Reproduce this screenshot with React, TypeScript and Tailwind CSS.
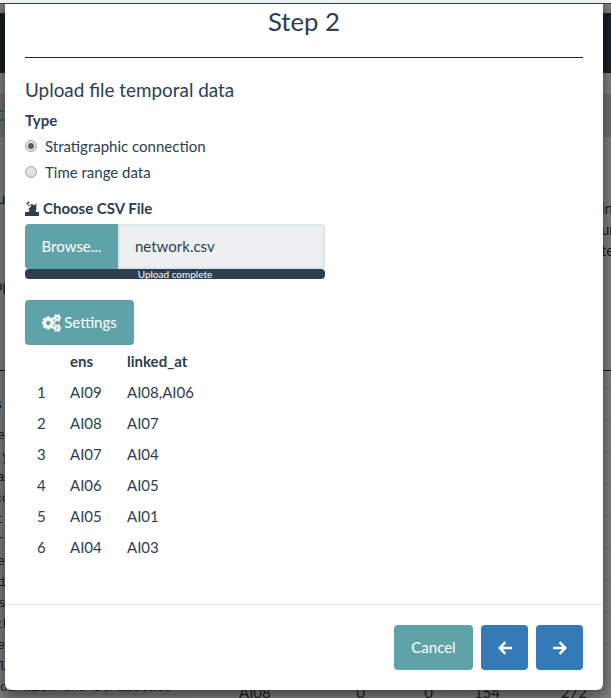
import React from "react";

const rows = [
  ["1", "AI09", "AI08,AI06"],
  ["2", "AI08", "AI07"],
  ["3", "AI07", "AI04"],
  ["4", "AI06", "AI05"],
  ["5", "AI05", "AI01"],
  ["6", "AI04", "AI03"],
];

const helpLines: [string, string][] = [
  ["e", "-ml-[3px]"],
  ["y", "ml-[2px]"],
  ["a", "-ml-[3px]"],
  ["co", "-ml-[6px]"],
  ["t)", "-ml-[5px]"],
  ["ri", "-ml-[4px]"],
  ["e", "-ml-[3px]"],
  ["i", "-ml-px"],
  ["s", "-ml-[2px]"],
  ["th", "-ml-[5px]"],
  ["e", "-ml-[3px]"],
  ["l", "-ml-[2px]"],
  ["oa with the Stradstats", "ml-0"],
];

function Backdrop() {
  return (
    <div className="h-[698px] w-[611px] overflow-hidden bg-white pt-[13px] text-[15px] text-[#2c3e50]">
      <div className="h-[60px] bg-[#2c3e50]" />
      <div className="h-[21px]" />
      <div className="flex h-[43px] items-center bg-[#dcdfe0]">
        <span className="-ml-[6px] text-[#18bc9c]">C</span>
      </div>
      <div className="flex h-[233px] justify-between">
        <div className="h-[233px] w-[100px] pt-[51px]">
          <div className="-ml-[3px] h-[87px] leading-[21px]">u</div>
          <div className="-ml-[6px] leading-[21px]">op</div>
        </div>
        <div className="w-[10px] overflow-hidden pt-[61px] leading-[21px]">
          <div>in</div>
          <div>un</div>
          <div>te</div>
        </div>
      </div>
      <div className="h-px bg-[#222]" />
      <div className="flex">
        <div className="w-[196px] shrink-0 bg-[#f7f7f7]">
          <div className="-ml-[5px] h-[54px] pt-[22px] text-[15px] leading-[21px] font-bold">s</div>
          <div className="font-['Liberation_Mono',monospace] text-[13px] leading-[21px] whitespace-pre">
            {helpLines.map(([line, indent], i) => (
              <div key={i} className={indent}>
                {line}
              </div>
            ))}
          </div>
        </div>
        <div className="flex-1 pt-4">
          {[0, 1, 2, 3, 4, 5, 6, 7, 8].map((n) => (
            <div key={n} className="h-8 border-t border-[#e6e6e6]" />
          ))}
          <div className="grid h-10 grid-cols-[31px_84px_67px_67px_67px_87px_1fr] border-t border-[#e6e6e6] pt-[5px]">
            <span className="border-r border-[#e6e6e6]" />
            <span className="border-r border-[#e6e6e6] pl-3">AI08</span>
            <span className="border-r border-[#e6e6e6] pr-3 text-right">0</span>
            <span className="border-r border-[#e6e6e6] pr-[11px] text-right">0</span>
            <span className="border-r border-[#e6e6e6] pr-[11px] text-right">154</span>
            <span className="border-r border-[#e6e6e6] pr-[11px] text-right">272</span>
          </div>
        </div>
      </div>
    </div>
  );
}

function Radio({ label, checked }: { label: string; checked?: boolean }) {
  return (
    <label className="flex h-[26px] items-center gap-2">
      <span className="flex size-3 items-center justify-center rounded-full border border-[#a8a8a8] bg-linear-to-b from-[#e4e4e4] to-[#dedede]">
        {checked && <span className="size-1.5 rounded-full bg-[#5c5c5c]" />}
      </span>
      <span>{label}</span>
    </label>
  );
}

function UploadMark() {
  return (
    <svg className="h-[15px] w-[14px]" viewBox="0 0 14 15" fill="currentColor">
      <path d="M0 11h14v4H0z" />
      <path d="M3.700 11 4.500 9 3.300 8l3-3-1.300-1.300L7 3l2.300 1.400L11.300 2v7l-.8.600.8 1.400z" />
      <path d="M1 2.800 3.800.300 4.800 1.300 2 3.800zM2.600 4.200l1.400-1 .9 1-1.300 1z" />
    </svg>
  );
}

function Cogs() {
  return (
    <svg className="h-[18px] w-[19px]" viewBox="0 -1536 1920 1792" fill="currentColor" stroke="currentColor" strokeWidth="70">
      <path
        transform="scale(1,-1)"
        d="M896 640q0 106-75 181t-181 75-181-75-75-181 75-181 181-75 181 75 75 181zM1664 128q0 52-38 90t-90 38-90-38-38-90q0-53 37.500-90.500t90.500-37.500 90.500 37.500 37.500 90.500zM1664 1152q0 52-38 90t-90 38-90-38-38-90q0-53 37.500-90.500t90.500-37.500 90.500 37.500 37.500 90.500zM1280 731v-185q0-10-7-19.500t-16-10.500l-155-24q-11-35-32-76 34-48 90-115 7-11 7-20 0-12-7-19-23-30-82.500-89.500t-78.500-59.500q-11 0-21 7l-115 90q-37-19-77-31-11-108-23-155-7-24-30-24h-186q-11 0-20 7.500t-10 17.500l-23 153q-34 10-75 31l-118-89q-7-7-20-7-11 0-21 8-144 133-144 160 0 9 7 19 10 14 41 53t47 61q-23 44-35 82l-152 24q-10 1-17 9.500t-7 19.500v185q0 10 7 19.500t16 10.500l155 24q11 35 32 76-34 48-90 115-7 11-7 20 0 12 7 20 22 30 82 89t79 59q11 0 21-7l115-90q34 18 77 32 11 108 23 154 7 24 30 24h186q11 0 20-7.500t10-17.500l23-153q34-10 75-31l118 89q8 7 20 7 11 0 21-8 144-133 144-160 0-8-7-19-12-16-42-54t-45-60q23-48 34-82l152-23q10-2 17-10.500t7-19.500zM1920 198v-140q0-16-149-31-12-27-30-52 51-113 51-138 0-4-4-7-122-71-124-71-8 0-46 47t-52 68q-20-2-30-2t-30 2q-14-21-52-68t-46-47q-2 0-124 71-4 3-4 7 0 25 51 138-18 25-30 52-149 15-149 31v140q0 16 149 31 13 29 30 52-51 113-51 138 0 4 4 7 4 2 35 20t59 34 30 16q8 0 46-46.500t52-67.500q20 2 30 2t30-2q51 71 92 112l6 2q4 0 124-70 4-3 4-7 0-25-51-138 17-23 30-52 149-15 149-31zM1920 1222v-140q0-16-149-31-12-27-30-52 51-113 51-138 0-4-4-7-122-71-124-71-8 0-46 47t-52 68q-20-2-30-2t-30 2q-14-21-52-68t-46-47q-2 0-124 71-4 3-4 7 0 25 51 138-18 25-30 52-149 15-149 31v140q0 16 149 31 13 29 30 52-51 113-51 138 0 4 4 7 4 2 35 20t59 34 30 16q8 0 46-46.500t52-67.500q20 2 30 2t30-2q51 71 92 112l6 2q4 0 124-70 4-3 4-7 0-25-51-138 17-23 30-52 149-15 149-31z"
      />
    </svg>
  );
}

function Arrow({ back }: { back?: boolean }) {
  return (
    <button className="flex h-[45px] w-[47px] items-center justify-center rounded-[4px] bg-[#337ab7] text-white">
      <svg className={back ? "size-[14px]" : "size-[14px] rotate-180"} viewBox="0 0 14 14" fill="none" stroke="currentColor" strokeWidth="2.500">
        <path d="M14 7H2M7.400 1.200 1.800 7l5.600 5.800" />
      </svg>
    </button>
  );
}

export default function App() {
  return (
    <div className="relative h-[698px] w-[611px] overflow-hidden font-['Lato',sans-serif] text-[#2c3e50]">
      <Backdrop />
      <div className="absolute inset-0 bg-black/50" />

      <div className="absolute top-0 left-[5px] flex h-[690px] w-[598px] flex-col rounded-b-[6px] bg-white text-[15px] leading-[21px] shadow-[0_5px_15px_rgba(0,0,0,0.5)]">
        <div className="flex-1 px-5 pt-2">
          <h3 className="h-[49px] text-center text-[25.7px] leading-[27px]">Step 2</h3>
          <div className="h-px bg-[#222]" />
          <h4 className="pt-[21px] text-[18.9px] leading-[21px]">Upload file temporal data</h4>
          <div className="mt-[10px] mb-[2px] font-bold">Type</div>
          <Radio label="Stratigraphic connection" checked />
          <Radio label="Time range data" />

          <div className="mt-[13px] flex items-center gap-1 font-bold">
            <UploadMark />
            <span>Choose CSV File</span>
          </div>
          <div className="mt-[5px] flex h-[45px] w-[300px]">
            <button className="w-[93px] rounded-l-[4px] bg-[#5fa3a8] text-white">Browse...</button>
            <div className="flex flex-1 items-center rounded-r-[4px] border-2 border-[#dce4ec] bg-[#ecf0f1] pl-[15px]">network.csv</div>
          </div>
          <div className="h-[10px] w-[300px] rounded-[4px] bg-[#2c3e50] text-center text-[10px] leading-[11px] text-white">Upload complete</div>

          <button className="mt-[21px] flex h-[45px] w-[109px] items-center justify-center gap-[3px] rounded-[4px] bg-[#5fa3a8] text-white">
            <Cogs />
            <span>Settings</span>
          </button>

          <table className="mt-px">
            <thead>
              <tr className="h-[31px] text-left">
                <th className="w-[33px]" />
                <th className="w-[57px] pl-3">ens</th>
                <th className="pl-3">linked_at</th>
              </tr>
            </thead>
            <tbody>
              {rows.map(([n, ens, linked]) => (
                <tr key={n} className="h-[31px]">
                  <td className="pr-3 pl-3">{n}</td>
                  <td className="pl-3">{ens}</td>
                  <td className="pl-3">{linked}</td>
                </tr>
              ))}
            </tbody>
          </table>
        </div>

        <div className="flex h-[86px] items-start justify-end gap-2 border-t border-[#e5e5e5] px-5 pt-5">
          <button className="h-[45px] w-[79px] rounded-[4px] bg-[#5fa3a8] text-white">Cancel</button>
          <Arrow back />
          <Arrow />
        </div>
      </div>

      <div className="absolute inset-x-0 top-0 h-1 border-b border-[#2c3e50] bg-[#ecf0f1]" />
    </div>
  );
}
